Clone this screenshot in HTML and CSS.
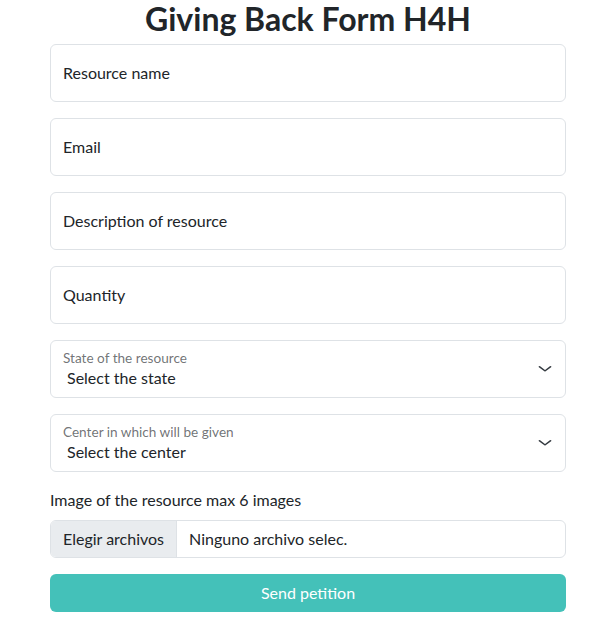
FILE: index.html
```html
<!DOCTYPE html>
<html lang="en">
<head>
<meta charset="utf-8">
<title>Giving Back Form H4H</title>
<link rel="stylesheet" href="styles.css">
</head>
<body>
<main class="page">
  <h2 class="title">Giving Back Form H4H</h2>
  <form class="form">
    <input class="field" type="text" placeholder="Resource name">
    <input class="field" type="email" placeholder="Email">
    <input class="field" type="text" placeholder="Description of resource">
    <input class="field" type="text" placeholder="Quantity">
    <div class="select-field">
      <span class="select-label">State of the resource</span>
      <span class="select-value">Select the state</span>
      <svg class="chevron" viewBox="0 0 16 16" width="16" height="12" preserveAspectRatio="none"><path d="m2.5 5 5.5 5.5 5.5-5.5" fill="none" stroke="#343a40" stroke-width="1.8" stroke-linecap="round" stroke-linejoin="round"/></svg>
    </div>
    <div class="select-field">
      <span class="select-label">Center in which will be given</span>
      <span class="select-value">Select the center</span>
      <svg class="chevron" viewBox="0 0 16 16" width="16" height="12" preserveAspectRatio="none"><path d="m2.5 5 5.5 5.5 5.5-5.5" fill="none" stroke="#343a40" stroke-width="1.8" stroke-linecap="round" stroke-linejoin="round"/></svg>
    </div>
    <div class="file-group">
      <span class="file-caption">Image of the resource max 6 images</span>
      <div class="file-input">
        <span class="file-button">Elegir archivos</span>
        <span class="file-name">Ninguno archivo selec.</span>
      </div>
    </div>
    <button class="submit" type="button">Send petition</button>
  </form>
</main>
</body>
</html>
```
FILE: styles.css
```css
* { box-sizing: border-box; }
body {
  margin: 0;
  background: #fff;
  color: #212529;
  font-family: "Lato", "Noto Sans", sans-serif;
  font-size: 16px;
  line-height: 24px;
}
.page {
  width: 516px;
  margin-left: 50px;
}
.title {
  margin: 0 0 6px;
  font-size: 32px;
  line-height: 38px;
  font-weight: 700;
  text-align: center;
}
.form {
  display: flex;
  flex-direction: column;
  gap: 16px;
}
.field {
  display: block;
  width: 100%;
  height: 58px;
  padding: 0 12px 2px;
  border: 1px solid #dee2e6;
  border-radius: 6px;
  font: inherit;
  color: #212529;
  background: #fff;
  outline: none;
}
.field::placeholder {
  color: #212529;
  opacity: 1;
}
.select-field {
  position: relative;
  height: 58px;
  border: 1px solid #dee2e6;
  border-radius: 6px;
  padding: 9px 12px 0 12px;
  display: flex;
  flex-direction: column;
}
.select-label {
  font-size: 13.6px;
  line-height: 16px;
  color: rgba(33, 37, 41, 0.65);
}
.select-value {
  margin-top: 0;
  padding-left: 4px;
  line-height: 24px;
}
.chevron {
  position: absolute;
  right: 12px;
  top: 22px;
}
.file-group {
  display: flex;
  flex-direction: column;
  gap: 8px;
}
.file-caption {
  line-height: 24px;
}
.file-input {
  display: flex;
  height: 38px;
  border: 1px solid #dee2e6;
  border-radius: 6px;
  overflow: hidden;
}
.file-button {
  display: flex;
  align-items: center;
  padding: 0 12px;
  background: #e9ecef;
  border-right: 1px solid #dee2e6;
}
.file-name {
  display: flex;
  align-items: center;
  padding: 0 12px;
}
.submit {
  height: 38px;
  border: none;
  border-radius: 6px;
  background: #44c1b9;
  color: #fff;
  font: inherit;
  cursor: pointer;
}
```
